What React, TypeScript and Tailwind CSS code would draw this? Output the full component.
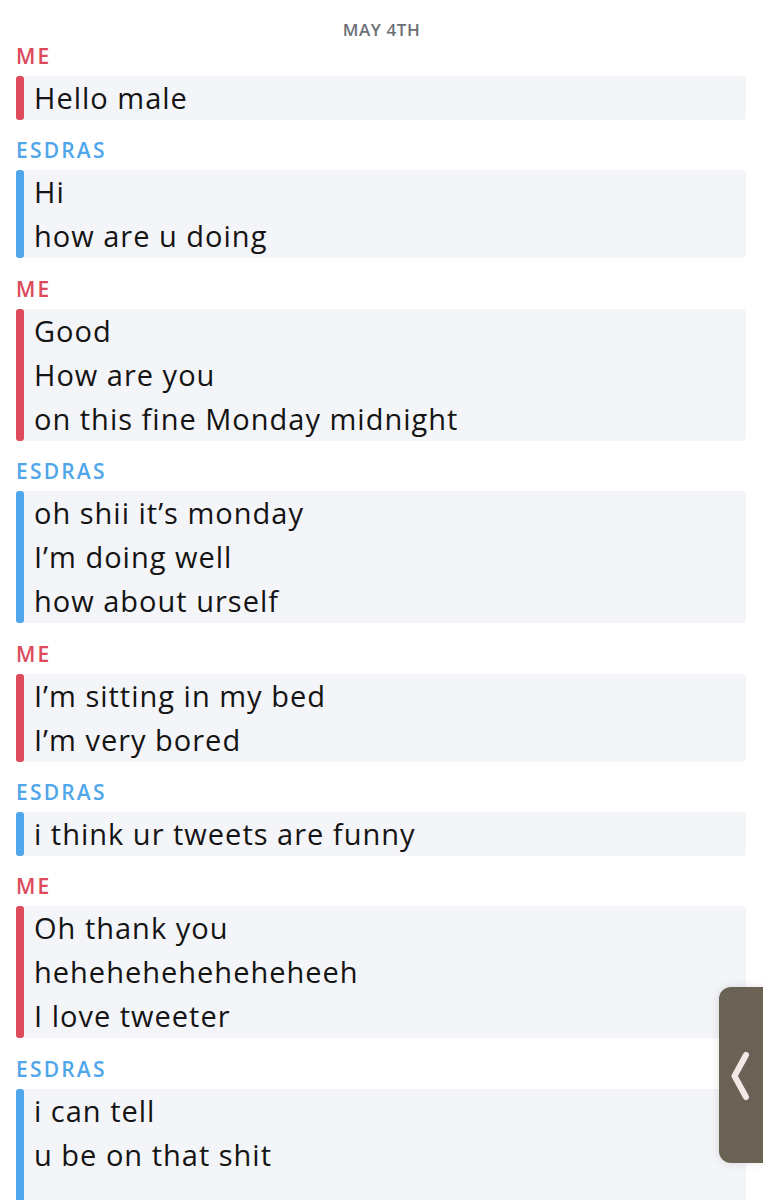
import React from 'react';

type Msg = { from: 'me' | 'esdras'; lines: string[] };

const messages: Msg[] = [
	{ from: 'me', lines: ['Hello male'] },
	{ from: 'esdras', lines: ['Hi', 'how are u doing'] },
	{ from: 'me', lines: ['Good', 'How are you', 'on this fine Monday midnight'] },
	{ from: 'esdras', lines: ['oh shii it\u2019s monday', 'I\u2019m doing well', 'how about urself'] },
	{ from: 'me', lines: ['I\u2019m sitting in my bed', 'I\u2019m very bored'] },
	{ from: 'esdras', lines: ['i think ur tweets are funny'] },
	{ from: 'me', lines: ['Oh thank you', 'heheheheheheheheeh', 'I love tweeter'] },
	{ from: 'esdras', lines: ['i can tell', 'u be on that shit', '\u00A0'] },
];

const App = () => {
	return (
		<div className="relative h-[1200px] overflow-hidden bg-white font-['Open_Sans',sans-serif]">
			{/* Date header */}
			<div className="pt-[18px] text-center text-[17px] leading-[24px] font-semibold tracking-[0.6px] text-[#6c6f76]">
				MAY 4TH
			</div>

			<div className="pl-4 pr-[17px]">
				{messages.map((m, i) => {
					const isMe = m.from === 'me';
					return (
						<div key={i}>
							<div
								className={`${i === 0 ? 'mt-0' : 'mt-[16.4px]'} mb-[6px] text-[21px] leading-[28px] font-semibold tracking-[2.2px] ${
									isMe ? 'text-[#dc4a5c]' : 'text-[#50a6ea]'
								}`}
							>
								{isMe ? 'ME' : 'ESDRAS'}
							</div>
							<div className="flex rounded-[4px] bg-[#f4f5f8]">
								<div className={`w-[8px] shrink-0 rounded-[3px] ${isMe ? 'bg-[#dc4a5c]' : 'bg-[#50a6ea]'}`} />
								<div className="pl-[10px] text-[29px] leading-[44px] tracking-[1px] text-[#141414]">
									{m.lines.map((l, j) => (
										<div key={j}>{l}</div>
									))}
								</div>
							</div>
						</div>
					);
				})}
			</div>

			{/* Side drawer handle */}
			<div className="absolute right-0 top-[987px] flex h-[176px] w-[44px] items-center rounded-l-[12px] bg-[#6b6256] shadow-[0_0_10px_rgba(0,0,0,0.12)]">
				<svg width="22" height="52" viewBox="0 0 22 52" className="ml-[11px]">
					<path d="M16 6 L4.5 27 L16 48" fill="none" stroke="#f3e8e4" strokeWidth="6" strokeLinecap="round" strokeLinejoin="round" />
				</svg>
			</div>
		</div>
	);
};

export default App;
